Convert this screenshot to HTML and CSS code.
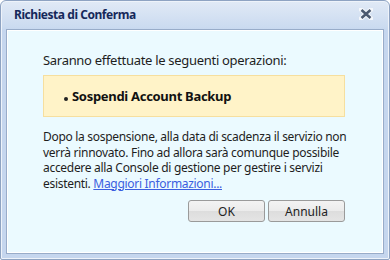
FILE: index.html
```
<!DOCTYPE html>
<html>
<head>
<meta charset="utf-8">
<link rel="stylesheet" href="styles.css">
</head>
<body>
<div class="window">
  <div class="titlebar">
    <span class="title">Richiesta di Conferma</span>
    <svg class="close" width="14" height="12" viewBox="0 0 14 12">
      <path d="M2 1.5 L12 10.5 M12 1.5 L2 10.5" stroke="#f4f7fb" stroke-width="4.6" stroke-linecap="square"/>
      <path d="M2.5 2 L11.5 10 M11.5 2 L2.5 10" stroke="#4b5a70" stroke-width="2.6"/>
    </svg>
  </div>
  <div class="frame">
    <div class="content">
      <p class="intro">Saranno effettuate le seguenti operazioni:</p>
      <div class="ops">
        <ul class="oplist"><li>Sospendi Account Backup</li></ul>
      </div>
      <p class="desc">Dopo la sospensione, alla data di scadenza il servizio non<br>verrà rinnovato. Fino ad allora sarà comunque possibile<br>accedere alla Console di gestione per gestire i servizi<br>esistenti. <a href="#" class="more">Maggiori Informazioni...</a></p>
      <div class="buttons">
        <button class="btn">OK</button>
        <button class="btn">Annulla</button>
      </div>
    </div>
  </div>
</div>
</body>
</html>
```
FILE: styles.css
```
* { box-sizing: border-box; }
html, body { margin: 0; padding: 0; background: #ffffff; }
body { font-family: "Noto Sans", "Open Sans", sans-serif; }
.window {
  width: 390px;
  height: 260px;
  border: 1px solid #8ea3c2;
  border-radius: 6px 6px 2px 2px;
  background: linear-gradient(#e1eaf6 0px, #cbdbf0 26px, #c5d6ee 30px, #c5d6ee 100%);
  display: flex;
  flex-direction: column;
  box-shadow: inset 0 0 0 1px #eef3fa;
}
.titlebar {
  height: 28px;
  display: flex;
  align-items: center;
  justify-content: space-between;
  padding: 0 16px 2px 13px;
  flex: none;
}
.title {
  font-weight: bold;
  font-size: 12px;
  color: #15285a;
  letter-spacing: -0.45px;
}
.close { display: block; }
.frame {
  flex: 1;
  margin: 0 5px 5px 5px;
  border: 1px solid #98acc9;
  background: #ebfaff;
  box-shadow: inset 0 0 0 1px #ffffff;
  display: flex;
}
.content {
  flex: 1;
  padding: 21px 36px 0 36px;
}
.intro {
  margin: 0;
  font-size: 13px;
  line-height: 18px;
  color: #1e1e1e;
  letter-spacing: -0.3px;
}
.ops {
  margin-top: 6px;
  height: 42px;
  width: 302px;
  background: #fff3c8;
  border: 1px solid #f6df9f;
  display: flex;
  align-items: center;
}
.oplist {
  margin: 0;
  padding: 0 0 0 20px;
  font-size: 13px;
  font-weight: bold;
  color: #111;
  list-style: none;
  letter-spacing: -0.3px;
}
.oplist li { display: flex; align-items: baseline; }
.oplist li::before {
  content: "";
  width: 4px;
  height: 4px;
  border-radius: 50%;
  background: #222;
  margin-right: 4px;
}
.desc {
  margin: 12px 0 0 0;
  font-size: 12px;
  line-height: 15.6px;
  color: #1e1e1e;
  white-space: nowrap;
  letter-spacing: -0.3px;
}
.more { color: #3b5fe0; text-decoration: underline; }
.buttons {
  display: flex;
  justify-content: flex-end;
  gap: 3px;
  margin-top: 9px;
  width: 302px;
}
.btn {
  width: 77px;
  height: 22px;
  font-family: "Noto Sans", sans-serif;
  font-size: 12px;
  color: #222;
  border: 1px solid #9a9a9a;
  border-radius: 3px;
  background: linear-gradient(#f3f3f3, #ebebeb 50%, #dddddd 51%, #e4e4e4);
  padding: 0;
}
```
